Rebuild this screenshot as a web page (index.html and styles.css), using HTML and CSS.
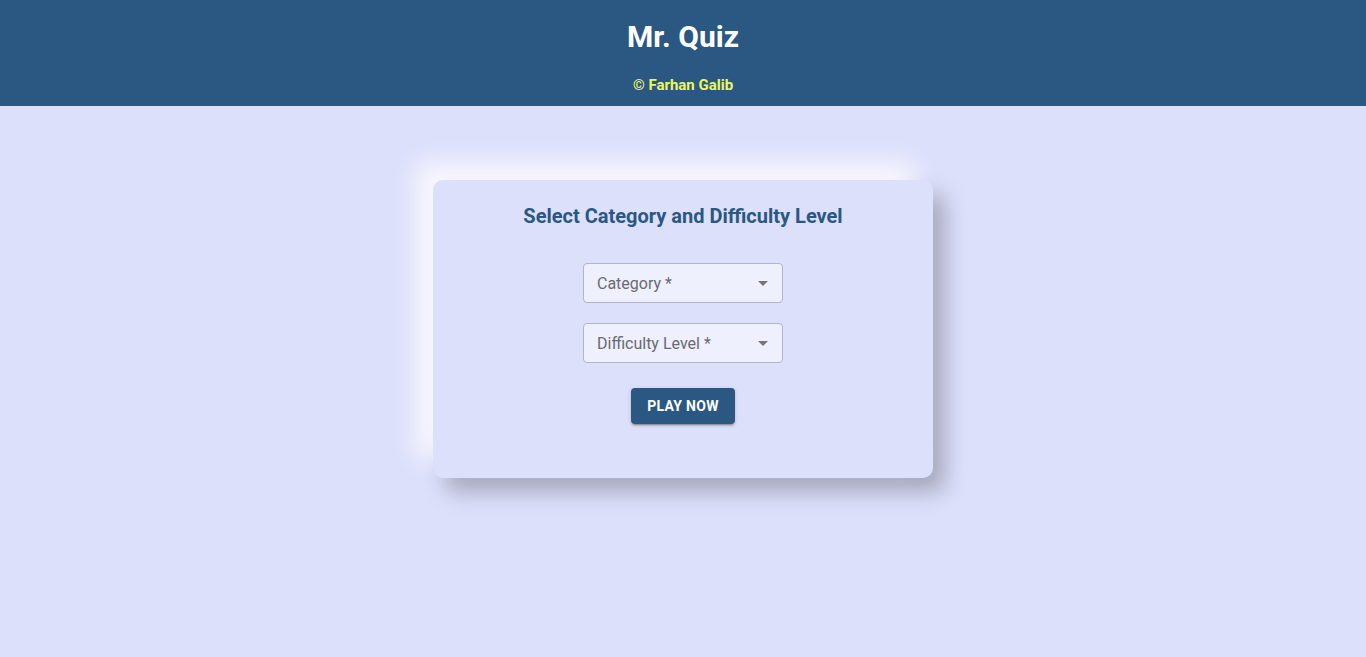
FILE: index.html
```html
<!DOCTYPE html>
<html>
<head>
<meta charset="utf-8">
<link rel="stylesheet" href="styles.css">
</head>
<body>
<header class="header">
  <h1 class="title">Mr. Quiz</h1>
  <p class="author">© Farhan Galib</p>
</header>
<main class="main">
  <section class="card">
    <h2 class="card-title">Select Category and Difficulty Level</h2>
    <div class="select">
      <span class="select-label">Category *</span>
      <svg class="caret" width="10" height="5" viewBox="0 0 10 5"><path d="M0 0L5 5L10 0Z" fill="#757575"/></svg>
    </div>
    <div class="select">
      <span class="select-label">Difficulty Level *</span>
      <svg class="caret" width="10" height="5" viewBox="0 0 10 5"><path d="M0 0L5 5L10 0Z" fill="#757575"/></svg>
    </div>
    <button class="play">Play Now</button>
  </section>
</main>
</body>
</html>
```
FILE: styles.css
```css
html, body {
  margin: 0;
  padding: 0;
}
body {
  background: #dde0fb;
  font-family: Roboto, "Liberation Sans", sans-serif;
  height: 657px;
  overflow: hidden;
}
.header {
  background: #2a5882;
  height: 106px;
  box-sizing: border-box;
  padding-top: 19px;
  text-align: center;
}
.title {
  margin: 0;
  color: #ffffff;
  font-size: 30px;
  font-weight: 700;
  line-height: 36px;
}
.author {
  margin: 20px 0 0;
  color: #e9f760;
  font-size: 15px;
  font-weight: 700;
  line-height: 20px;
}
.main {
  display: flex;
  justify-content: center;
  padding-top: 74px;
}
.card {
  width: 500px;
  height: 298px;
  box-sizing: border-box;
  background: #dde0fb;
  border-radius: 10px;
  box-shadow: -18px -18px 24px rgba(255, 255, 255, 0.75), 12px 14px 22px rgba(0, 0, 0, 0.25);
  display: flex;
  flex-direction: column;
  align-items: center;
  padding-top: 24px;
}
.card-title {
  margin: 0 0 35px;
  color: #2a5882;
  font-size: 20px;
  font-weight: 700;
  line-height: 24px;
}
.select {
  width: 200px;
  height: 40px;
  box-sizing: border-box;
  background: #eef0fd;
  border: 1px solid #b3b4c4;
  border-radius: 4px;
  display: flex;
  align-items: center;
  justify-content: space-between;
  padding: 1px 14px 0 13px;
  margin-bottom: 20px;
}
.select-label {
  color: #6a6a72;
  font-size: 16px;
  line-height: 20px;
}
.caret {
  display: block;
}
.play {
  margin-top: 5px;
  width: 104px;
  height: 36px;
  border: none;
  border-radius: 4px;
  background: #2a5882;
  color: #ffffff;
  font-family: Roboto, "Liberation Sans", sans-serif;
  font-size: 14px;
  font-weight: 700;
  text-transform: uppercase;
  letter-spacing: 0.3px;
  box-shadow: 0 3px 1px -2px rgba(0,0,0,0.2), 0 2px 2px 0 rgba(0,0,0,0.14), 0 1px 5px 0 rgba(0,0,0,0.12);
}
```
